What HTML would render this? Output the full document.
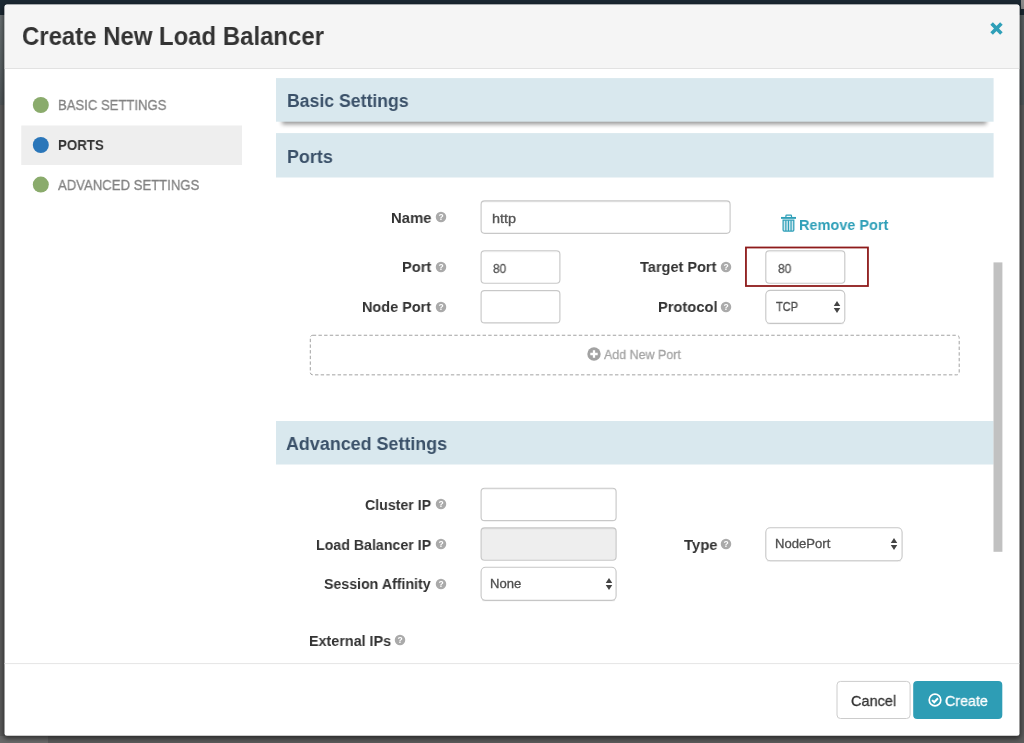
<!DOCTYPE html>
<html lang="en">
<head>
<meta charset="utf-8">
<title>Create New Load Balancer</title>
<style>
*{box-sizing:border-box;margin:0;padding:0}
html,body{width:1024px;height:743px;overflow:hidden}
body{position:relative;background:#5b5b5b;font-family:"Liberation Sans",sans-serif;color:#333}
.a{position:absolute}
.t{position:absolute;white-space:nowrap;transform-origin:0 0;display:block;will-change:transform}
.bg-top{left:0;top:0;width:1024px;height:15px;background:#1b2832}
.bg-left{left:0;top:15px;width:6px;height:90px;background:linear-gradient(#697072,#4f5659)}
.bg-right{left:1018px;top:15px;width:6px;height:90px;background:linear-gradient(#5a6062,#4f5659)}
.bg-tr{left:1021px;top:0;width:3px;height:9px;background:#8a8a8a}
.bg-bl{left:0;top:736px;width:48px;height:7px;background:#696969}
svg{will-change:transform}
</style>
</head>
<body>
<div class="a bg-top"></div>
<div class="a bg-left"></div>
<div class="a bg-right"></div>
<div class="a bg-tr"></div>
<div class="a bg-bl"></div>

<svg class="a" style="left:0;top:0" width="1024" height="743" viewBox="0 0 1024 743">
<defs><filter id="sh" x="-2%" y="-2%" width="104%" height="104%"><feGaussianBlur stdDeviation="2.5"/></filter>
<clipPath id="mc"><rect x="4.5" y="4.5" width="1015" height="731.2" rx="2.5" ry="2.5"/></clipPath></defs>
<rect x="3.5" y="5.5" width="1017" height="733" rx="4" fill="#000" opacity=".55" filter="url(#sh)"/>
<rect x="4.5" y="4.5" width="1015" height="731.2" rx="2.5" ry="2.5" fill="#fff"/>
<g clip-path="url(#mc)"><rect x="4.5" y="4.5" width="1015" height="64" fill="#f5f5f5"/><rect x="4.5" y="68" width="1015" height="1" fill="#e2e2e2"/></g>
</svg>
<!-- close X -->
<svg class="a" style="left:990.2px;top:21.8px" width="13" height="13" viewBox="0 0 13 13"><path d="M1.6 1.6 L11.4 11.4 M11.4 1.6 L1.6 11.4" stroke="#2e9fb8" stroke-width="3.6" fill="none"/></svg>

<svg class="a" style="left:0;top:0" width="1024" height="743" viewBox="0 0 1024 743">
<defs><filter id="sh2" x="-2%" y="-100%" width="104%" height="400%"><feGaussianBlur stdDeviation="2.2"/></filter></defs>
<!-- sidebar -->
<rect x="21.25" y="125.5" width="220.75" height="39.5" fill="#eee"/>
<circle cx="40.8" cy="105" r="8" fill="#8aab6c"/>
<circle cx="40.8" cy="145" r="8" fill="#2a76b9"/>
<circle cx="40.8" cy="184.6" r="8" fill="#8aab6c"/>
<!-- section headers -->
<rect x="282" y="114" width="704.5" height="10.4" fill="#000" opacity=".4" filter="url(#sh2)"/>
<rect x="276" y="78.1" width="717.6" height="43.6" fill="#d9e8ee"/>
<rect x="276" y="133.1" width="717.6" height="44.4" fill="#d9e8ee"/>
<rect x="276" y="421" width="717.6" height="43.5" fill="#d9e8ee"/>
<!-- ports form -->
<rect x="481.1" y="200.90" width="249.00" height="32.45" rx="3.5" fill="#fff" stroke="#c8c8c8" stroke-width="1.15"/><rect x="482.6" y="201.50" width="246.00" height="1" fill="#000" opacity=".05"/>
<rect x="481.1" y="250.75" width="78.80" height="32.45" rx="3.5" fill="#fff" stroke="#c8c8c8" stroke-width="1.15"/><rect x="482.6" y="251.35" width="75.80" height="1" fill="#000" opacity=".05"/>
<rect x="481.1" y="290.45" width="78.80" height="32.45" rx="3.5" fill="#fff" stroke="#c8c8c8" stroke-width="1.15"/><rect x="482.6" y="291.05" width="75.80" height="1" fill="#000" opacity=".05"/>
<rect x="745.95" y="247.5" width="122.0" height="38.5" fill="none" stroke="#8e1b1b" stroke-width="1.8"/>
<rect x="765.8" y="250.75" width="79.00" height="32.45" rx="3.5" fill="#fff" stroke="#c8c8c8" stroke-width="1.15"/><rect x="767.3" y="251.35" width="76.00" height="1" fill="#000" opacity=".05"/>
<rect x="766.8" y="322.20" width="77.00" height="2" rx="1" fill="#000" opacity=".10"/><rect x="765.8" y="290.35" width="79.00" height="33.05" rx="4.5" fill="#fff" stroke="#c6c6c6" stroke-width="1.1"/>
<rect x="310.3" y="335.25" width="648.9" height="39.6" rx="2.5" fill="none" stroke="#a2a2a2" stroke-dasharray="3.4 2.26"/>
<!-- advanced form -->
<rect x="481.1" y="488.20" width="135.00" height="32.45" rx="3.5" fill="#fff" stroke="#c8c8c8" stroke-width="1.15"/><rect x="482.6" y="488.80" width="132.00" height="1" fill="#000" opacity=".05"/>
<rect x="481.1" y="527.80" width="135.00" height="32.45" rx="3.5" fill="#eee" stroke="#c8c8c8" stroke-width="1.15"/><rect x="482.6" y="528.40" width="132.00" height="1" fill="#000" opacity=".05"/>
<rect x="482.1" y="599.15" width="133.00" height="2" rx="1" fill="#000" opacity=".10"/><rect x="481.1" y="567.30" width="135.00" height="33.05" rx="4.5" fill="#fff" stroke="#c6c6c6" stroke-width="1.1"/>
<rect x="766.8" y="559.55" width="134.30" height="2" rx="1" fill="#000" opacity=".10"/><rect x="765.8" y="527.70" width="136.30" height="33.05" rx="4.5" fill="#fff" stroke="#c6c6c6" stroke-width="1.1"/>
<!-- scrollbar -->
<rect x="993.5" y="262.4" width="8.9" height="289.4" fill="#c1c1c1"/>
<!-- footer -->
<rect x="4.5" y="663.1" width="1015" height="1" fill="#e5e5e5"/>
<rect x="837" y="681.4" width="73.1" height="37.1" rx="3.5" fill="#fff" stroke="#ccc"/>
<rect x="913.2" y="680.9" width="89.1" height="38.1" rx="4" fill="#2e9db5"/>
</svg>

<svg class="a" style="left:434.75px;top:211.40px" width="12" height="12" viewBox="0 0 12 12"><circle cx="6" cy="6" r="5.25" fill="#aaa"/><text x="6" y="9" text-anchor="middle" font-family="Liberation Sans, sans-serif" font-weight="bold" font-size="8.5" fill="#fff">?</text></svg>
<svg class="a" style="left:434.75px;top:261.20px" width="12" height="12" viewBox="0 0 12 12"><circle cx="6" cy="6" r="5.25" fill="#aaa"/><text x="6" y="9" text-anchor="middle" font-family="Liberation Sans, sans-serif" font-weight="bold" font-size="8.5" fill="#fff">?</text></svg>
<svg class="a" style="left:434.75px;top:300.80px" width="12" height="12" viewBox="0 0 12 12"><circle cx="6" cy="6" r="5.25" fill="#aaa"/><text x="6" y="9" text-anchor="middle" font-family="Liberation Sans, sans-serif" font-weight="bold" font-size="8.5" fill="#fff">?</text></svg>
<svg class="a" style="left:719.80px;top:261.20px" width="12" height="12" viewBox="0 0 12 12"><circle cx="6" cy="6" r="5.25" fill="#aaa"/><text x="6" y="9" text-anchor="middle" font-family="Liberation Sans, sans-serif" font-weight="bold" font-size="8.5" fill="#fff">?</text></svg>
<svg class="a" style="left:719.80px;top:300.90px" width="12" height="12" viewBox="0 0 12 12"><circle cx="6" cy="6" r="5.25" fill="#aaa"/><text x="6" y="9" text-anchor="middle" font-family="Liberation Sans, sans-serif" font-weight="bold" font-size="8.5" fill="#fff">?</text></svg>
<svg class="a" style="left:434.75px;top:498.30px" width="12" height="12" viewBox="0 0 12 12"><circle cx="6" cy="6" r="5.25" fill="#aaa"/><text x="6" y="9" text-anchor="middle" font-family="Liberation Sans, sans-serif" font-weight="bold" font-size="8.5" fill="#fff">?</text></svg>
<svg class="a" style="left:434.75px;top:538.00px" width="12" height="12" viewBox="0 0 12 12"><circle cx="6" cy="6" r="5.25" fill="#aaa"/><text x="6" y="9" text-anchor="middle" font-family="Liberation Sans, sans-serif" font-weight="bold" font-size="8.5" fill="#fff">?</text></svg>
<svg class="a" style="left:434.75px;top:577.70px" width="12" height="12" viewBox="0 0 12 12"><circle cx="6" cy="6" r="5.25" fill="#aaa"/><text x="6" y="9" text-anchor="middle" font-family="Liberation Sans, sans-serif" font-weight="bold" font-size="8.5" fill="#fff">?</text></svg>
<svg class="a" style="left:719.80px;top:538.00px" width="12" height="12" viewBox="0 0 12 12"><circle cx="6" cy="6" r="5.25" fill="#aaa"/><text x="6" y="9" text-anchor="middle" font-family="Liberation Sans, sans-serif" font-weight="bold" font-size="8.5" fill="#fff">?</text></svg>
<svg class="a" style="left:394.00px;top:634.20px" width="12" height="12" viewBox="0 0 12 12"><circle cx="6" cy="6" r="5.25" fill="#aaa"/><text x="6" y="9" text-anchor="middle" font-family="Liberation Sans, sans-serif" font-weight="bold" font-size="8.5" fill="#fff">?</text></svg>
<svg class="a" style="left:780px;top:213px" width="18" height="20" viewBox="0 0 18 20">
<g fill="none" stroke="#2e9fb8">
<path d="M5.9 4 V2.9 Q5.9 2.2 6.6 2.2 H10.8 Q11.5 2.2 11.5 2.9 V4" stroke-width="1.2"/>
<path d="M1 4.9 H16" stroke-width="1.9"/>
<path d="M3.1 7.2 V17.1 Q3.1 18.1 4.1 18.1 H12.8 Q13.8 18.1 13.8 17.1 V7.2 Z" stroke-width="1.25" fill="#cfe9ef"/>
<path d="M5.85 7.2 V18 M8.45 7.2 V18 M11.05 7.2 V18" stroke-width="1.15"/>
</g></svg>
<svg class="a" style="left:586.4px;top:345.7px" width="16" height="16" viewBox="0 0 16 16"><circle cx="8" cy="8" r="6.7" fill="#a2a2a2"/><path d="M8 4.3 V11.7 M4.3 8 H11.7" stroke="#fff" stroke-width="2.3" fill="none"/></svg>
<svg class="a" style="left:926.85px;top:692px" width="16" height="16" viewBox="0 0 16 16"><circle cx="8" cy="8" r="5.8" fill="none" stroke="#fff" stroke-width="1.7"/><path d="M5.1 8.1 L7.2 10.2 L11 6.2" stroke="#fff" stroke-width="2" fill="none"/></svg>
<svg class="a" style="left:832.75px;top:299.55px" width="8" height="14" viewBox="0 0 8 14"><path d="M4 0.9 L7.25 5.9 H0.75 Z M4 13.1 L7.25 8.1 H0.75 Z" fill="#444"/></svg>
<svg class="a" style="left:604.50px;top:576.70px" width="8" height="14" viewBox="0 0 8 14"><path d="M4 0.9 L7.25 5.9 H0.75 Z M4 13.1 L7.25 8.1 H0.75 Z" fill="#444"/></svg>
<svg class="a" style="left:890.40px;top:537.00px" width="8" height="14" viewBox="0 0 8 14"><path d="M4 0.9 L7.25 5.9 H0.75 Z M4 13.1 L7.25 8.1 H0.75 Z" fill="#444"/></svg>
<span class="t" style="left:22.03px;top:22.85px;font-size:26px;line-height:26px;font-weight:bold;color:#333;transform:scale(0.9204,1)">Create New Load Balancer</span>
<span class="t" style="left:57.67px;top:97.40px;font-size:15px;line-height:15px;font-weight:normal;color:#838383;-webkit-text-stroke:0.3px #838383;transform:scale(0.8727,1)">BASIC SETTINGS</span>
<span class="t" style="left:57.71px;top:137.34px;font-size:15px;line-height:15px;font-weight:bold;color:#333;transform:scale(0.8855,1.02)">PORTS</span>
<span class="t" style="left:57.83px;top:176.80px;font-size:15px;line-height:15px;font-weight:normal;color:#838383;-webkit-text-stroke:0.3px #838383;transform:scale(0.8750,1)">ADVANCED SETTINGS</span>
<span class="t" style="left:287.02px;top:91.30px;font-size:19.2px;line-height:19.2px;font-weight:bold;color:#3b5169;transform:scale(0.9203,1)">Basic Settings</span>
<span class="t" style="left:287.01px;top:146.60px;font-size:19.2px;line-height:19.2px;font-weight:bold;color:#3b5169;transform:scale(0.9326,1)">Ports</span>
<span class="t" style="left:286.21px;top:433.70px;font-size:19.2px;line-height:19.2px;font-weight:bold;color:#3b5169;transform:scale(0.9330,1)">Advanced Settings</span>
<span class="t" style="left:391.42px;top:209.74px;font-size:15px;line-height:15px;font-weight:bold;color:#333;transform:scale(0.9903,1.02)">Name</span>
<span class="t" style="left:401.63px;top:259.14px;font-size:15px;line-height:15px;font-weight:bold;color:#333;transform:scale(0.9766,1.02)">Port</span>
<span class="t" style="left:361.64px;top:299.14px;font-size:15px;line-height:15px;font-weight:bold;color:#333;transform:scale(0.9630,1.02)">Node Port</span>
<span class="t" style="left:640.37px;top:259.14px;font-size:15px;line-height:15px;font-weight:bold;color:#333;transform:scale(0.9678,1.02)">Target Port</span>
<span class="t" style="left:658.13px;top:299.24px;font-size:15px;line-height:15px;font-weight:bold;color:#333;transform:scale(0.9776,1.02)">Protocol</span>
<span class="t" style="left:799.44px;top:216.94px;font-size:15px;line-height:15px;font-weight:bold;color:#2e9fb8;transform:scale(0.9660,1.02)">Remove Port</span>
<span class="t" style="left:492.10px;top:213.10px;font-size:12.6px;line-height:12.6px;font-weight:normal;color:#555;-webkit-text-stroke:0.3px #555;transform:scale(1.1472,1)">http</span>
<span class="t" style="left:492.80px;top:262.60px;font-size:12.6px;line-height:12.6px;font-weight:normal;color:#555;-webkit-text-stroke:0.3px #555;transform:scale(0.9420,1)">80</span>
<span class="t" style="left:778.00px;top:262.50px;font-size:12.6px;line-height:12.6px;font-weight:normal;color:#555;-webkit-text-stroke:0.3px #555;transform:scale(0.9492,1)">80</span>
<span class="t" style="left:775.84px;top:300.80px;font-size:12.4px;line-height:12.4px;font-weight:normal;color:#4f4f4f;-webkit-text-stroke:0.3px #4f4f4f;transform:scale(0.8928,1)">TCP</span>
<span class="t" style="left:604.23px;top:348.30px;font-size:13.5px;line-height:13.5px;font-weight:normal;color:#a4a4a4;-webkit-text-stroke:0.3px #a4a4a4;transform:scale(0.9230,1)">Add New Port</span>
<span class="t" style="left:364.87px;top:496.94px;font-size:15px;line-height:15px;font-weight:bold;color:#333;transform:scale(0.9446,1.02)">Cluster IP</span>
<span class="t" style="left:316.36px;top:536.54px;font-size:15px;line-height:15px;font-weight:bold;color:#333;transform:scale(0.9458,1.02)">Load Balancer IP</span>
<span class="t" style="left:324.20px;top:576.04px;font-size:15px;line-height:15px;font-weight:bold;color:#333;transform:scale(0.9449,1.02)">Session Affinity</span>
<span class="t" style="left:683.57px;top:536.54px;font-size:15px;line-height:15px;font-weight:bold;color:#333;transform:scale(0.9880,1.02)">Type</span>
<span class="t" style="left:489.93px;top:577.90px;font-size:12.4px;line-height:12.4px;font-weight:normal;color:#4f4f4f;-webkit-text-stroke:0.3px #4f4f4f;transform:scale(1.0530,1)">None</span>
<span class="t" style="left:774.87px;top:538.40px;font-size:12.4px;line-height:12.4px;font-weight:normal;color:#4f4f4f;-webkit-text-stroke:0.3px #4f4f4f;transform:scale(1.0558,1)">NodePort</span>
<span class="t" style="left:309.15px;top:632.64px;font-size:15px;line-height:15px;font-weight:bold;color:#333;transform:scale(0.9564,1.02)">External IPs</span>
<span class="t" style="left:851.07px;top:693.60px;font-size:14.6px;line-height:14.6px;font-weight:normal;color:#333;-webkit-text-stroke:0.3px #333;transform:scale(0.9914,1)">Cancel</span>
<span class="t" style="left:945.09px;top:693.50px;font-size:14.6px;line-height:14.6px;font-weight:normal;color:#fff;-webkit-text-stroke:0.3px #fff;transform:scale(0.9757,1)">Create</span>
</body>
</html>
